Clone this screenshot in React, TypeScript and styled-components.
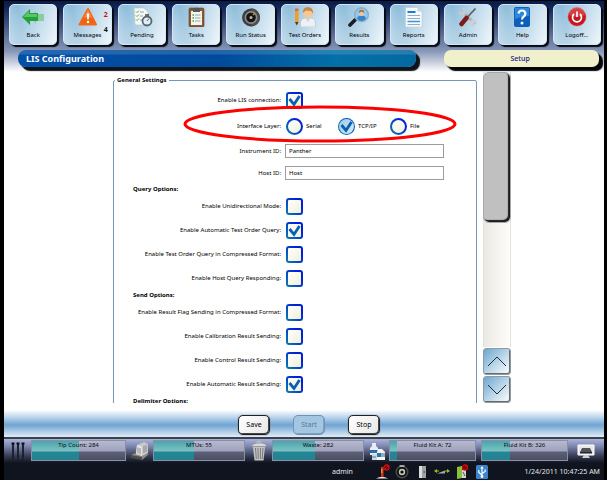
import React, { useId } from 'react';
import styled, { createGlobalStyle, css } from 'styled-components';

const GlobalStyle = createGlobalStyle`
  *, *::before, *::after { box-sizing: border-box; }
  body { margin: 0; background: #000; }
  button, input { font: inherit; color: inherit; margin: 0; }
`;

const Screen = styled.div`
  min-height: 100vh;
  display: flex;
  flex-direction: column;
  padding: 1px 3px 0 4px;
  background: #000;
  color: #000;
  font: 6px/10px 'Noto Sans', 'Open Sans', sans-serif;
`;

const Header = styled.header`
  background: linear-gradient(#071a48 0, #14295c 8px, #8697b8 50px, #ccd2df 62px, #fff 71px);
`;

const Toolbar = styled.nav`
  display: flex;
  gap: 6px;
  padding: 3px 3px 0 5px;
`;

const ToolButton = styled.button`
  position: relative;
  flex: 1;
  min-width: 0;
  height: 41px;
  display: flex;
  flex-direction: column;
  align-items: center;
  gap: 3px;
  padding: 2px 0 0;
  border: 1px solid #d5e6f2;
  border-radius: 5px;
  background: linear-gradient(75deg, #c4dcec 0%, transparent 30%),
    linear-gradient(110deg, #7fb4d6 0%, #b4d3e7 45%, #eef6fb 100%);
  box-shadow: 2px 2px 1px #05080f;
  white-space: nowrap;

  svg { width: 22px; height: 20px; display: block; }
`;

const Count = styled.span<{ $tone: string; $low?: boolean }>`
  position: absolute;
  right: 3px;
  top: ${p => (p.$low ? 20 : 5)}px;
  font-weight: 700;
  font-size: 7px;
  color: ${p => p.$tone};
`;

const Titles = styled.div`
  display: flex;
  gap: 28px;
  padding: 5px 5px 5px 14px;
`;

const PageTitle = styled.h1`
  flex: 396;
  margin: 0;
  padding-left: 8px;
  border-radius: 8px 6px 8px 8px;
  font-size: 9px;
  line-height: 17px;
  color: #fff;
  background: linear-gradient(#ffffff22 0 4px, transparent 5px),
    linear-gradient(90deg, #0450a8 0%, #004a9c 50%, #0470a8 80%, #0468a0 100%);
  box-shadow: 2px 2px 1px #10141c, 4px 4px 1px #10141c;
`;

const SectionTitle = styled.h2`
  flex: 157;
  margin: 0;
  border-radius: 7px;
  font-size: 7px;
  font-weight: 500;
  line-height: 17px;
  text-align: center;
  text-indent: -3px;
  color: #14147c;
  background: #f0f0cc;
  box-shadow: 2px 2px 1px #05070c, 4px 4px 1px #05070c;
`;

const Main = styled.main`
  flex: 1;
  display: flex;
  gap: 6px;
  padding: 0 93px 7px 109px;
  background: #fff;
`;

const Viewport = styled.div`
  position: relative;
  flex: 1;
  height: 331px;
  overflow: hidden;
  padding-top: 3px;
`;

const Group = styled.fieldset`
  margin: 0;
  padding: 3px 0 12px;
  min-width: 0;
  border: 1px solid #7597bd;
  border-radius: 2px;
`;

const Legend = styled.legend`
  margin-left: 1px;
  padding: 0 2px;
  font-weight: 700;
  color: #000;
`;

const Row = styled.div<{ $h: number }>`
  display: grid;
  grid-template-columns: 167px 1fr;
  column-gap: 4px;
  align-items: center;
  height: ${p => p.$h}px;
  padding-right: 32px;
`;

const RowLabel = styled.label`
  text-align: right;
  white-space: nowrap;
`;

const GroupTitle = styled.h3`
  margin: 0 0 0 19px;
  font-size: 6px;
  line-height: 10px;
  color: #000;
`;

const TextBox = styled.input`
  width: 100%;
  height: 14px;
  padding: 0 3px;
  border: 1px solid #9c9c9c;
  border-radius: 0;
  background: #fff;
  outline: none;
`;

const Tick = styled.span<{ $round?: boolean }>`
  display: inline-grid;
  width: 17px;
  height: 17px;
  margin-left: 1px;

  input, svg { grid-area: 1 / 1; width: 17px; height: 17px; }

  input {
    appearance: none;
    border: 2px solid transparent;
    border-radius: ${p => (p.$round ? '50%' : '3px')};
    background: linear-gradient(135deg, #fffffb, #f1efdd) padding-box,
      linear-gradient(50deg, #0880b0, #0020d8 75%) border-box;
  }
  svg { visibility: hidden; pointer-events: none; }
  input:checked + svg { visibility: visible; }
  ${p => p.$round && css`
    input:checked {
      border-width: 1px;
      background: linear-gradient(135deg, #9fc8e4, #d9ecf8) padding-box,
        linear-gradient(50deg, #0880b0, #0048c8) border-box;
    }
  `}
`;

const Choices = styled.div`
  display: flex;
  gap: 36px;
`;

const Choice = styled.label`
  display: flex;
  align-items: center;
  gap: 3px;
  width: 16px;
  white-space: nowrap;
  ${Tick} { flex: none; }
`;

const Marker = styled.svg`
  position: absolute;
  left: 69px;
  top: 32px;
  width: 276px;
  height: 40px;
  pointer-events: none;
`;

const ScrollBar = styled.div`
  width: 28px;
  display: flex;
  flex-direction: column;
  gap: 1px;
`;

const Track = styled.div`
  flex: 1;
  border: solid #e4e4d6;
  border-width: 0 1px;
  background: linear-gradient(90deg, #ebe9e2, #fdfdfb);
`;

const Thumb = styled.div`
  height: 151px;
  margin: 0 -1px;
  border-radius: 6px;
  background: #c0c0c0;
  border: 1px solid #a8a8a8;
  box-shadow: inset -2px -2px 1px #1c1c1c;
`;

const ScrollButton = styled.button`
  width: 28px;
  height: 27px;
  padding: 0;
  border: 1px solid #8e9aa4;
  border-radius: 3px;
  background: linear-gradient(135deg, #6ba6cf, #b8d5e8 50%, #fff);
  box-shadow: inset -1px -1px 0 #6a6a6a;
  svg { display: block; width: 26px; height: 25px; }
`;

const Actions = styled.div`
  display: flex;
  justify-content: center;
  gap: 23px;
  padding: 5px 0 2px 10px;
  background: linear-gradient(#fff 0, #b4d0ea 8px, #6fa4d3 15px, #a9c8e5 21px, #e2edf6 27px);
`;

const ActionButton = styled.button`
  width: 32px;
  height: 20px;
  padding: 0;
  border: 1px solid #222;
  border-radius: 5px;
  font-size: 7px;
  background: linear-gradient(135deg, #fff, #e6e6e6);
  box-shadow: inset -1px -1px 0 #444, 0 0 1px #333;
  &:disabled {
    color: #5a7893;
    border-color: #6f93b0;
    background: #a3c6e2;
    box-shadow: inset -1px -1px 0 #7fa3bf;
  }
`;

const Supplies = styled.section`
  display: grid;
  grid-template-columns: 27px 95fr 27px 92fr 27px 92fr 25px 87fr 5px 87fr 36px;
  align-items: center;
  padding: 1px 0 2px;
  border-top: 2px solid #3c424c;
  background: linear-gradient(#a9b3dc 0, #7f88b0 7px, #363c54 17px, #10141f 24px);
  svg { display: block; width: 20px; height: 20px; margin: 0 auto; }
`;

const Meter = styled.div`
  position: relative;
  height: 21px;
  border: 1px solid #8a90a4;
  background: linear-gradient(#b6b9d0 0, #9fa3bb 10px, #5d6178 11px, #4a4e62 100%);
  text-align: center;
  line-height: 8px;
  color: #0a0a14;
`;

const Fill = styled.div`
  height: 100%;
  background: linear-gradient(#48a5ac 0, #7dc2c4 10px, #258596 11px, #248292 100%);
`;

const MeterText = styled.span`
  position: absolute;
  inset: 0;
`;

const StatusBar = styled.footer`
  display: grid;
  grid-template-columns: 352fr 137px 111fr;
  align-items: center;
  padding-right: 4px;
  height: 17px;
  background: #10141f;
  color: #e4e6ea;
  font-size: 7px;
`;

const User = styled.span`
  text-align: right;
`;

const Devices = styled.div`
  display: flex;
  gap: 4px;
  justify-content: flex-end;
  svg { width: 16px; height: 16px; }
`;

const Clock = styled.time`
  text-align: right;
  white-space: nowrap;
`;

const icons: Record<string, React.ReactNode> = {
  Back: (
    <svg viewBox="0 0 22 20">
      <path d="M9 10 14 4v3h8v7h-8v3z" fill="#7fcb8d" opacity=".85" />
      <path d="M0 10 8 2v4h8v8H8v4z" fill="#22a238" />
      <path d="M1 10 7 4v3h8v3z" fill="#5cc468" />
    </svg>
  ),
  Messages: (
    <svg viewBox="0 0 22 20">
      <path d="M11 2 19 17.500H2.500z" fill="#f4600c" stroke="#ee6a1a" strokeWidth="2" strokeLinejoin="round" />
      <path d="M11 3 15 10.500H7z" fill="#fb8b4c" />
      <path d="M9.800 6.500h2.400l-.5 6h-1.400z" fill="#fff" />
      <circle cx="11" cy="15" r="1.300" fill="#fff" />
    </svg>
  ),
  Pending: (
    <svg viewBox="0 0 22 20">
      <path d="M3 1h10l4 4v13H4z" fill="#f6f8f8" stroke="#b4bcc0" strokeWidth=".6" />
      <path d="M5 4.500l1 1 2-2M5 8.500l1 1 2-2M5 12.500l1 1 2-2" fill="none" stroke="#58a848" />
      <path d="M9 5h4M9 9h3M9 13h2" stroke="#9aa4a8" />
      <path d="M14 8h4" stroke="#444" strokeWidth="1.500" />
      <circle cx="16" cy="14" r="4.500" fill="#e0edf4" stroke="#4e6876" strokeWidth="1.800" />
      <path d="M16 14l2-2.500" stroke="#c04020" />
    </svg>
  ),
  Tasks: (
    <svg viewBox="0 0 22 20">
      <rect x="4" y="1" width="15" height="19" rx="1.500" fill="#8b5a34" stroke="#5f3c22" strokeWidth=".6" />
      <path d="M6 4h11v14H6z" fill="#f3f5ee" />
      <path d="M8 1.500h2.500a1 1 0 0 1 2 0H15V5H8z" fill="#55585c" />
      <path d="M7.500 8h1.500M7.500 11h1.500M7.500 14h1.500" stroke="#4a9c40" strokeWidth="1.500" />
      <path d="M10 8h5.500M10 11h5.500M10 14h5.500" stroke="#9aa8a0" />
    </svg>
  ),
  'Run Status': (
    <svg viewBox="0 0 22 20">
      <circle cx="11" cy="10.500" r="9" fill="#3c3e40" />
      <path d="M11 1.500a9 9 0 0 1 0 18z" fill="#4c4e50" />
      <circle cx="11" cy="10.500" r="6.500" fill="#8a8c8c" />
      <circle cx="11" cy="10.500" r="4.800" fill="#141414" />
      <circle cx="11" cy="10.500" r="1.500" fill="#b8b8b0" />
      <path d="M13 8l2-2" stroke="#c89030" strokeWidth="1.500" />
    </svg>
  ),
  'Test Orders': (
    <svg viewBox="0 0 22 20">
      <path d="M1 4h3.500v11L2.800 18 1 15z" fill="#f0a020" />
      <path d="M1 1.500h3.500V4H1z" fill="#d86848" />
      <path d="M1 15h3.500L2.800 18.500z" fill="#4a3a28" />
      <path d="M6.500 20v-4q0-4.500 4.500-5h6q4.500.5 4.500 5v4z" fill="#eef0f2" stroke="#b8bcc2" strokeWidth=".6" />
      <path d="M11.500 11l2.500 4 2.500-4z" fill="#c4d4e4" />
      <circle cx="14" cy="6" r="5" fill="#f6c898" />
      <path d="M8.800 6q0-6 5.200-6t5.200 7L17 4 12 3.500z" fill="#c88848" />
    </svg>
  ),
  Results: (
    <svg viewBox="0 0 22 20">
      <path d="M7 13 2 18" stroke="#1c1c20" strokeWidth="3.600" strokeLinecap="round" />
      <circle cx="13.500" cy="7.700" r="6.800" fill="#8cccf2" stroke="#8cb0c8" strokeWidth="1.600" />
      <path d="M9 11.500q.5-3 4.500-3t4.500 3q-2 2.500-4.500 2.500T9 11.500z" fill="#3484cc" />
      <circle cx="13.500" cy="6.500" r="2.500" fill="#f0c49c" />
      <path d="M10.800 6q0-3.300 2.700-3.300T16.200 6l-2.700-1.500z" fill="#a87040" />
    </svg>
  ),
  Reports: (
    <svg viewBox="0 0 22 20">
      <path d="M2.500.5h12l4.500 4V20H2.500z" fill="#f6f9fc" stroke="#b8c8d4" strokeWidth=".6" />
      <path d="M14.500.5v4H19z" fill="#c4d4e0" />
      <path d="M4.500 5h8" stroke="#1c7cd4" strokeWidth="2" />
      <path d="M4.500 8.500H17M4.500 11.500H17M4.500 17.500H17" stroke="#98acbc" />
      <path d="M4.500 14.500H17" stroke="#3c94dc" strokeWidth="1.500" />
    </svg>
  ),
  Admin: (
    <svg viewBox="0 0 22 20">
      <path d="M5 4 18 17" stroke="#b0b4b8" strokeWidth="3" />
      <path d="M2 4.500A3.500 3.500 0 1 0 5.500 1L6 4 4.500 5z" fill="#c8ccd0" />
      <path d="M20 15.500a3.500 3.500 0 1 0-3 4L16.500 17l1.500-1.500z" fill="#ccd0d4" />
      <path d="M18.500 1.500 10 10.500" stroke="#5c6064" strokeWidth="1.800" />
      <path d="M9.500 11 4.500 17" stroke="#7c1c1c" strokeWidth="4.500" strokeLinecap="round" />
    </svg>
  ),
  Help: (
    <svg viewBox="0 0 22 20">
      <rect x="3" y="0" width="16" height="20" rx="2" fill="#0c60b8" />
      <path d="M4 1h14v8Q11 9 4 12z" fill="#2e88dc" />
      <path d="M7.500 6.500Q8 3.500 11 3.500t3.400 3q0 1.800-1.700 3-1.600 1-1.600 3" fill="none" stroke="#fff" strokeWidth="2.200" />
      <circle cx="11" cy="16" r="1.500" fill="#fff" />
    </svg>
  ),
  'Logoff...': (
    <svg viewBox="0 0 22 20">
      <circle cx="11" cy="10" r="9" fill="#c41820" stroke="#e05050" strokeWidth=".6" />
      <path d="M3 8a8 8 0 0 1 16 0q-8 4-16 0z" fill="#e05a58" opacity=".6" />
      <path d="M8 7a4.500 4.500 0 1 0 6 0" fill="none" stroke="#fff" strokeWidth="1.700" />
      <path d="M11 4.500v5.500" stroke="#fff" strokeWidth="1.700" />
    </svg>
  ),
};

const TipsIcon = () => (
  <svg viewBox="0 0 20 20">
    <path d="M5 2v14M10 2v14M15 2v14" stroke="#20222c" strokeWidth="2" />
    <path d="M3.500 2.500h3M8.500 2.500h3M13.500 2.500h3" stroke="#0c0e14" strokeWidth="2" />
    <path d="M5 14v6M10 14v6M15 14v6" stroke="#14161e" />
  </svg>
);

const MtuIcon = () => (
  <svg viewBox="0 0 20 20">
    <path d="M1 14l7-3 11 2-7 6z" fill="#8c8c8c" />
    <path d="M1 14l11 2v3L1 17z" fill="#4c4c4c" />
    <path d="M7 4l7-3 4 2v9l-6 3-6-2z" fill="#c8c8c8" />
    <path d="M7 4l5 1.500V15l-6-2z" fill="#e4e4e4" />
    <path d="M8 6.500v6M10 7v6.500M14 5v7M16 4v7" stroke="#8a8a8a" />
  </svg>
);

const TrashIcon = () => (
  <svg viewBox="0 0 20 20">
    <path d="M4 6h12l-1.500 13.500h-9z" fill="#c4c4c4" />
    <path d="M6.500 7l.8 11M9 7l.2 11M11.500 7l-.2 11M14 7l-.8 11" stroke="#787878" />
    <path d="M2.500 5.500Q3 2.500 10 2t7.500 3.500z" fill="#d8d8d8" stroke="#8c8c8c" strokeWidth=".6" />
    <path d="M8 2q0-1.500 2-1.500T12 2" fill="none" stroke="#ccc" />
  </svg>
);

const FluidIcon = () => (
  <svg viewBox="0 0 20 20">
    <path d="M5 2h4v3l2 2v7H3V7l2-2z" fill="#e8ecf0" />
    <path d="M3 9h8v3H3z" fill="#2c6cac" />
    <path d="M5 13h6v6H5z" fill="#d0d8e0" />
    <path d="M11 8h4l3 3v8h-8v-8z" fill="#f2f4f6" />
    <path d="M10 12h4v4h-4z" fill="#2c74a4" />
    <path d="M14 12h4v4h-4zM5 15h4v2H5z" fill="#8cb0c0" />
  </svg>
);

const MonitorIcon = () => (
  <svg viewBox="0 0 20 20">
    <path d="M2 4h16v10H2z" fill="#e8e8e8" stroke="#fff" />
    <path d="M6 7h8l2 4H4z" fill="#505458" />
    <path d="M4 11h12v1.500H4z" fill="#24282c" />
    <path d="M8 14h4l2 3H6z" fill="#d0d0d0" />
  </svg>
);

const deviceIcons = [
  <svg key="lamp" viewBox="0 0 16 16">
    <path d="M2 14.500Q8 11 14 14.500z" fill="#e8e8e8" />
    <path d="M7 3h2.500v10H7z" fill="#d03818" />
    <path d="M7.800 5v4" stroke="#f4b050" />
    <circle cx="12.500" cy="3.500" r="2.500" fill="#400" stroke="#d80c0c" strokeWidth="1.300" />
    <path d="M11 5l3-3" stroke="#d80c0c" />
  </svg>,
  <svg key="rotor" viewBox="0 0 16 16">
    <circle cx="8" cy="8" r="6.500" fill="#4c4c48" />
    <circle cx="8" cy="8" r="5" fill="#101010" />
    <circle cx="8" cy="8" r="3.200" fill="#c4c4bc" />
    <circle cx="8" cy="8" r="1.600" fill="#0c0c0c" />
    <path d="M5.500 2h5" stroke="#c8c8c0" strokeWidth="1.500" />
  </svg>,
  <svg key="door" viewBox="0 0 16 16">
    <path d="M5 2h7v12H5z" fill="#a0a2a6" />
    <path d="M5 2h3v12H5z" fill="#dcdcdc" />
    <path d="M9.500 8h1.500" stroke="#333" />
  </svg>,
  <svg key="transfer" viewBox="0 0 16 16">
    <path d="M0 7 3 5v4zM16 7 13 5v4z" fill="#8cc820" />
    <path d="M2 7h3M11 7h3" stroke="#8cc820" />
    <path d="M3 9.500l8-3v3z" fill="#a8aaac" />
  </svg>,
  <svg key="reader" viewBox="0 0 16 16">
    <path d="M3 3l5-1v12l-5 1z" fill="#8cc038" />
    <path d="M8 6h4v8H8z" fill="#d0d4d8" />
    <path d="M9 8l2 4" stroke="#555" />
    <circle cx="11" cy="3.500" r="2.500" fill="#400" stroke="#d80c0c" strokeWidth="1.300" />
    <path d="M9.500 5l3-3" stroke="#d80c0c" />
  </svg>,
  <svg key="usb" viewBox="0 0 16 16">
    <rect x="2" y="1" width="12" height="14" rx="1.500" fill="#3c84cc" />
    <path d="M8 3v10M8 11 4.800 8.500V6M8 9.500l3.200-2V5.500" fill="none" stroke="#fff" strokeWidth="1.200" />
    <path d="M6.300 4.500 8 2l1.700 2.500z" fill="#fff" />
    <circle cx="8" cy="12.500" r="1.400" fill="#fff" />
  </svg>,
];

const CheckMark = () => (
  <svg viewBox="0 0 17 17">
    <path d="M3.500 7 8 12.500 13.500 4" fill="none" stroke="#0660b4" strokeWidth="2.800" />
  </svg>
);

const CheckRow = ({ label, checked }: { label: string; checked?: boolean }) => {
  const id = useId();
  return (
    <Row $h={24}>
      <RowLabel htmlFor={id}>{label}</RowLabel>
      <Tick>
        <input id={id} type="checkbox" defaultChecked={checked} />
        <CheckMark />
      </Tick>
    </Row>
  );
};

const TextRow = ({ label, value }: { label: string; value: string }) => {
  const id = useId();
  return (
    <Row $h={22}>
      <RowLabel htmlFor={id}>{label}</RowLabel>
      <TextBox id={id} type="text" defaultValue={value} />
    </Row>
  );
};

const Supply = ({ label, level }: { label: string; level: number }) => (
  <Meter>
    <Fill style={{ width: `${level}%` }} />
    <MeterText>{label}</MeterText>
  </Meter>
);

export default function App() {
  return (
    <>
      <GlobalStyle />
      <Screen>
        <Header>
          <Toolbar>
            {Object.keys(icons).map(name => (
              <ToolButton key={name} type="button">
                {icons[name]}
                {name}
                {name === 'Messages' && (
                  <>
                    <Count $tone="#c80c1c">2</Count>
                    <Count $tone="#111" $low>4</Count>
                  </>
                )}
              </ToolButton>
            ))}
          </Toolbar>
          <Titles>
            <PageTitle>LIS Configuration</PageTitle>
            <SectionTitle>Setup</SectionTitle>
          </Titles>
        </Header>

        <Main>
          <Viewport>
            <Group>
              <Legend>General Settings</Legend>
              <CheckRow label="Enable LIS connection:" checked />
              <Row $h={28} role="radiogroup" aria-labelledby="layer">
                <RowLabel as="span" id="layer">Interface Layer:</RowLabel>
                <Choices>
                  {['Serial', 'TCP/IP', 'File'].map(name => (
                    <Choice key={name}>
                      <Tick $round>
                        <input type="radio" name="layer" defaultChecked={name === 'TCP/IP'} />
                        <CheckMark />
                      </Tick>
                      {name}
                    </Choice>
                  ))}
                </Choices>
              </Row>
              <TextRow label="Instrument ID:" value="Panther" />
              <TextRow label="Host ID:" value="Host" />
              <GroupTitle>Query Options:</GroupTitle>
              <CheckRow label="Enable Unidirectional Mode:" />
              <CheckRow label="Enable Automatic Test Order Query:" checked />
              <CheckRow label="Enable Test Order Query in Compressed Format:" />
              <CheckRow label="Enable Host Query Responding:" />
              <GroupTitle>Send Options:</GroupTitle>
              <CheckRow label="Enable Result Flag Sending in Compressed Format:" />
              <CheckRow label="Enable Calibration Result Sending:" />
              <CheckRow label="Enable Control Result Sending:" />
              <CheckRow label="Enable Automatic Result Sending:" checked />
              <GroupTitle>Delimiter Options:</GroupTitle>
            </Group>
            <Marker viewBox="0 0 276 40">
              <ellipse cx="138" cy="20" rx="135" ry="17" fill="none" stroke="#f00" strokeWidth="3" />
            </Marker>
          </Viewport>
          <ScrollBar>
            <Track>
              <Thumb />
            </Track>
            <ScrollButton type="button" aria-label="Scroll up">
              <svg viewBox="0 0 26 25"><path d="M4 17 13 8l9 9" fill="none" stroke="#222c38" /></svg>
            </ScrollButton>
            <ScrollButton type="button" aria-label="Scroll down">
              <svg viewBox="0 0 26 25"><path d="M4 8l9 9 9-9" fill="none" stroke="#222c38" /></svg>
            </ScrollButton>
          </ScrollBar>
        </Main>

        <Actions>
          <ActionButton type="button">Save</ActionButton>
          <ActionButton type="button" disabled>Start</ActionButton>
          <ActionButton type="button">Stop</ActionButton>
        </Actions>

        <Supplies>
          <TipsIcon />
          <Supply label="Tip Count: 284" level={50} />
          <MtuIcon />
          <Supply label="MTUs: 55" level={44} />
          <TrashIcon />
          <Supply label="Waste: 282" level={47} />
          <FluidIcon />
          <Supply label="Fluid Kit A: 72" level={8} />
          <span />
          <Supply label="Fluid Kit B: 326" level={33} />
          <MonitorIcon />
        </Supplies>

        <StatusBar>
          <User>admin</User>
          <Devices>{deviceIcons}</Devices>
          <Clock>1/24/2011 10:47:25 AM</Clock>
        </StatusBar>
      </Screen>
    </>
  );
}
